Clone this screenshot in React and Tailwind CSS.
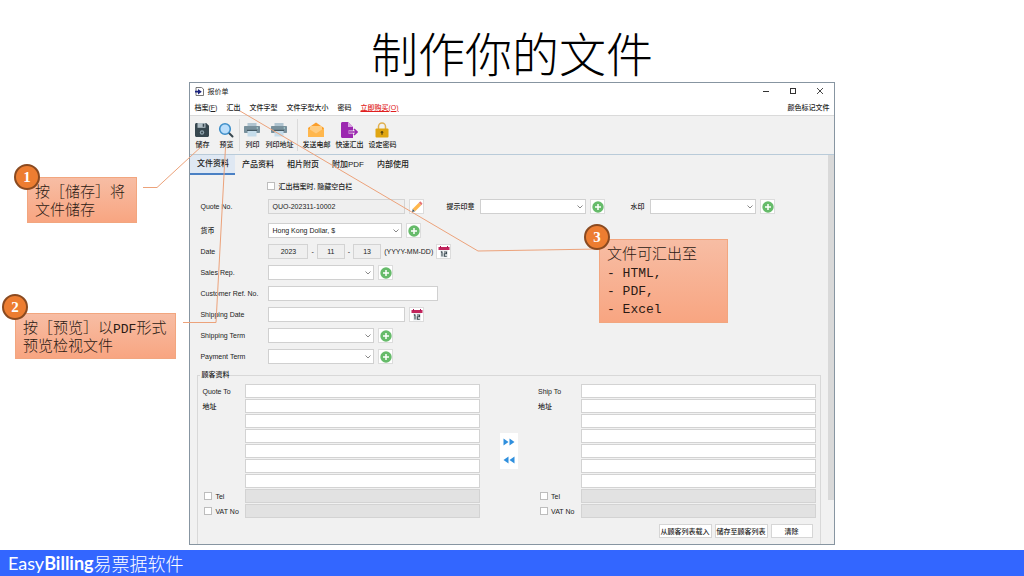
const DateIcon = () => (
  <svg viewBox="0 0 12 12" className="w-3 h-3">
    <rect x="0.5" y="1" width="11" height="3" fill="#c2255c" />
    <path d="M2.5 0v2M9.5 0v2" stroke="#ad1457" strokeWidth="1" />
    <rect x="2" y="4" width="8" height="7.5" fill="#eceff1" />
    <path d="M4 5.500v5M3 6.200l1-.7M6 6h2.500v1.800H6.300v2.400h2.500" stroke="#37474f" strokeWidth="1.100" fill="none" />
  </svg>
);

const PlusIcon = () => (
  <svg viewBox="0 0 12 12" className="w-3 h-3">
    <circle cx="6" cy="6" r="5.7" fill="#66bb6a" />
    <path d="M6 3v6M3 6h6" stroke="#fff" strokeWidth="1.500" />
  </svg>
);

const PencilIcon = () => (
  <svg viewBox="0 0 12 12" className="w-3 h-3">
    <path d="M1 11l.8-3.200 2.400 2.400z" fill="#455a64" />
    <path d="M1.800 7.800L7.800 1.800l2.400 2.400-6 6z" fill="#ffb74d" />
    <path d="M7.800 1.800l.9-.9c.4-.4.9-.4 1.300 0l1.100 1.100c.4.4.4.9 0 1.300l-.9.9z" fill="#e57373" />
  </svg>
);

const SaveIcon = () => (
  <svg viewBox="0 0 16 16" className="w-4 h-4">
    <path d="M1 2.500C1 1.700 1.700 1 2.500 1h9.700L15 3.800v9.700c0 .8-.7 1.500-1.500 1.500h-11C1.700 15 1 14.300 1 13.500z" fill="#37474f" />
    <rect x="3.500" y="1" width="8" height="4.800" fill="#b0bec5" />
    <rect x="8.700" y="1.800" width="1.600" height="3" fill="#37474f" />
    <circle cx="8" cy="10.500" r="2.200" fill="#90a4ae" />
    <circle cx="8" cy="10.500" r="1" fill="#37474f" />
  </svg>
);

const PreviewIcon = () => (
  <svg viewBox="0 0 16 16" className="w-4 h-4">
    <path d="M10.500 10.500l4 4" stroke="#37474f" strokeWidth="2" strokeLinecap="round" />
    <circle cx="7" cy="7" r="5.300" fill="#bbdefb" stroke="#3f8fc9" strokeWidth="1.600" />
  </svg>
);

const PrintIcon = () => (
  <svg viewBox="0 0 16 16" className="w-4 h-4">
    <rect x="3.500" y="1" width="9" height="4" fill="#b0c4d0" />
    <path d="M1 4h14c.6 0 1 .4 1 1v5c0 .6-.4 1-1 1H1c-.6 0-1-.4-1-1V5c0-.6.4-1 1-1z" fill="#78909c" />
    <rect x="3" y="7.800" width="10" height="1.200" fill="#455a64" />
    <rect x="3.500" y="9" width="9" height="5.500" fill="#c5dcea" />
    <circle cx="13.300" cy="6" r=".7" fill="#b2dfdb" />
  </svg>
);

const MailIcon = () => (
  <svg viewBox="0 0 16 16" className="w-4 h-4">
    <path d="M0 6l8-5.500L16 6v9H0z" fill="#fb9f2c" />
    <path d="M2 4h12v5l-6 3.500L2 9z" fill="#ffcc80" />
    <path d="M0 6.200l8 5.300 8-5.300V15H0z" fill="#ffb74d" />
  </svg>
);

const ExportIcon = () => (
  <svg viewBox="0 0 18 16" className="w-[18px] h-4">
    <path d="M1 1.500C1 .7 1.700 0 2.500 0H8l5 5v3.500H8.500v3H13V16H2.500C1.700 16 1 15.300 1 14.500z" fill="#9c27b0" />
    <path d="M8 0l5 5H8z" fill="#d9a3e3" />
    <path d="M8.500 10H17M14 7l3 3-3 3" stroke="#9c27b0" strokeWidth="1.600" fill="none" />
  </svg>
);

const LockIcon = () => (
  <svg viewBox="0 0 16 16" className="w-4 h-4">
    <path d="M4.500 8V4.500a3.500 3.500 0 017 0V8" stroke="#e0b050" strokeWidth="1.500" fill="none" />
    <rect x="1.500" y="6.500" width="13" height="9" rx="1" fill="#e0a612" />
    <circle cx="8" cy="10.300" r="1.300" fill="#5d4a10" />
    <path d="M8 10.500v2.500" stroke="#5d4a10" strokeWidth="1" />
  </svg>
);

const toolGroups = [
  [["储存", SaveIcon], ["预览", PreviewIcon]],
  [["列印", PrintIcon], ["列印地址", PrintIcon]],
  [["发送电邮", MailIcon], ["快速汇出", ExportIcon], ["设定密码", LockIcon]],
];

const tabs = ["文件资料", "产品资料", "相片附页", "附加PDF", "内部使用"];

const IconButton = ({ label, children }) => (
  <button aria-label={label} className="w-[15px] h-[15px] shrink-0 bg-white border border-[#dcdcdc] flex items-center justify-center">
    {children}
  </button>
);

const Select = ({ id, width, children }) => (
  <span className={`relative flex ${width}`}>
    <select id={id} className="appearance-none w-full h-[15px] bg-white border border-[#d0d0d0] pl-[3px] leading-[13px]">
      {children}
    </select>
    <svg viewBox="0 0 8 8" className="absolute right-0.5 top-1 w-2 h-2 pointer-events-none">
      <path d="M1.500 2.500L4 5l2.500-2.500" stroke="#888" fill="none" />
    </svg>
  </span>
);

const Row = ({ label, htmlFor, tall, children }) => (
  <div className={`flex items-center ${tall ? "h-[27px]" : "h-[21px]"}`}>
    <label htmlFor={htmlFor} className="w-[68px] shrink-0">{label}</label>
    <div className="flex items-center gap-1">{children}</div>
  </div>
);

const fieldClass = "h-[15px] border border-[#d0d0d0] bg-white px-[3px]";
const readOnlyClass = "h-[15px] border border-[#d3d3d3] bg-[#efefef]";
const partyClass = "flex-1 min-w-0 h-[14px] border border-[#d3d3d3]";

const Party = ({ id, title }) => (
  <div className="flex-1 min-w-0 flex flex-col gap-px">
    {[0, 1, 2, 3, 4, 5, 6].map((i) => (
      <div key={i} className="flex items-center">
        <label htmlFor={id + i} className="w-[43px]">{i === 0 ? title : i === 1 ? "地址" : ""}</label>
        <input id={id + i} type="text" className={`${partyClass} bg-white`} />
      </div>
    ))}
    {["Tel", "VAT No"].map((name) => (
      <div key={name} className="flex items-center">
        <label className="w-[43px] flex items-center gap-[3px] pl-0.5 whitespace-nowrap">
          <input type="checkbox" className="appearance-none w-2 h-2 bg-white border border-[#bdbdbd] shrink-0" />
          {name}
        </label>
        <input type="text" aria-label={name} disabled className={`${partyClass} bg-[#e2e2e2]`} />
      </div>
    ))}
  </div>
);

const BillingWindow = () => (
  <div className="w-[63%] mx-auto border border-[#8795a1] bg-[#f1f1f1] text-[7px] leading-none text-[#222] font-medium font-['Liberation_Sans','Noto_Sans_CJK_SC',sans-serif]">
    <div className="bg-white h-4 flex items-center justify-between pl-[5px] pr-[10px]">
      <div className="flex items-center gap-[3px] font-normal">
        <svg viewBox="0 0 9 9" className="w-[9px] h-[9px]">
          <path d="M1 .5h5.500L8.500 2v6.500H1z" fill="#fff" stroke="#555" strokeWidth=".8" />
          <path d="M0 3.800h3V2l3.800 2.700L3 7.400V5.600H0z" fill="#1a237e" />
        </svg>
        <span>报价单</span>
      </div>
      <div className="flex gap-[19px]">
        <button aria-label="Minimize">
          <svg viewBox="0 0 8 8" className="w-2 h-2"><path d="M1 4.500h6" stroke="#333" /></svg>
        </button>
        <button aria-label="Maximize">
          <svg viewBox="0 0 8 8" className="w-2 h-2"><rect x="1.500" y="1.500" width="5" height="5" fill="none" stroke="#333" /></svg>
        </button>
        <button aria-label="Close">
          <svg viewBox="0 0 8 8" className="w-2 h-2"><path d="M1 1l6 6M7 1L1 7" stroke="#333" strokeWidth=".9" /></svg>
        </button>
      </div>
    </div>

    <nav className="bg-white h-[17px] flex items-center gap-[9px] px-1 border-b border-[#dadada] whitespace-nowrap">
      <button>档案(<u>F</u>)</button>
      <button>汇出</button>
      <button>文件字型</button>
      <button>文件字型大小</button>
      <button>密码</button>
      <button className="text-[#e02020] underline">立即购买(O)</button>
      <button className="ml-auto">颜色标记文件</button>
    </nav>

    <div className="h-[39px] flex items-center pl-1 border-b border-[#b9cbd9]">
      {toolGroups.map((group, g) => (
        <div key={g} className={g === 0 ? "flex gap-2 pr-[5px]" : "h-8 flex items-center gap-[5px] px-1 border-l border-[#dadada]"}>
          {group.map(([label, Icon]) => (
            <button key={label} className="flex flex-col items-center gap-[3px] whitespace-nowrap">
              <Icon />
              {label}
            </button>
          ))}
        </div>
      ))}
    </div>

    <div className="flex">
      <div className="flex-1 min-w-0">
        <div className="flex text-[8px] h-5">
          {tabs.map((tab, i) => (
            <button key={tab} className={i === 0 ? "w-[45px] bg-[#dfe8f3] border-b-2 border-[#4a80c4]" : "w-[45px]"}>
              {tab}
            </button>
          ))}
        </div>

        <div className="pl-[10px] pt-1">
          <label className="h-[14px] flex items-center gap-[3px] pl-[67px]">
            <input type="checkbox" className="appearance-none w-2 h-2 bg-white border border-[#bdbdbd]" />
            汇出档案时, 隐藏空白栏
          </label>
          <Row label="Quote No." htmlFor="quote" tall>
            <input id="quote" type="text" readOnly value="QUO-202311-10002" className={`${readOnlyClass} w-[137px] px-[3px]`} />
            <IconButton label="Edit"><PencilIcon /></IconButton>
            <label htmlFor="stamp" className="ml-[18px] w-[30px] whitespace-nowrap">提示印章</label>
            <Select id="stamp" width="w-[106px]" />
            <IconButton label="Add stamp"><PlusIcon /></IconButton>
            <label htmlFor="watermark" className="ml-[21px] w-4">水印</label>
            <Select id="watermark" width="w-[106px]" />
            <IconButton label="Add watermark"><PlusIcon /></IconButton>
          </Row>
          <Row label="货币" htmlFor="currency">
            <Select id="currency" width="w-[134px]">
              <option>Hong Kong Dollar, $</option>
            </Select>
            <IconButton label="Add currency"><PlusIcon /></IconButton>
          </Row>
          <Row label="Date" htmlFor="year">
            <div className="flex items-center gap-[3px]">
              <input id="year" type="text" readOnly value="2023" className={`${readOnlyClass} w-10 text-center`} />
              <span>-</span>
              <input aria-label="Month" type="text" readOnly value="11" className={`${readOnlyClass} w-7 text-center`} />
              <span>-</span>
              <input aria-label="Day" type="text" readOnly value="13" className={`${readOnlyClass} w-7 text-center`} />
              <span>(YYYY-MM-DD)</span>
              <IconButton label="Pick date"><DateIcon /></IconButton>
            </div>
          </Row>
          <Row label="Sales Rep." htmlFor="sales">
            <Select id="sales" width="w-[106px]" />
            <IconButton label="Add sales rep"><PlusIcon /></IconButton>
          </Row>
          <Row label="Customer Ref. No." htmlFor="ref">
            <input id="ref" type="text" className={`${fieldClass} w-[170px]`} />
          </Row>
          <Row label="Shipping Date" htmlFor="shipdate">
            <input id="shipdate" type="text" className={`${fieldClass} w-[137px]`} />
            <IconButton label="Pick shipping date"><DateIcon /></IconButton>
          </Row>
          <Row label="Shipping Term" htmlFor="shipterm">
            <Select id="shipterm" width="w-[106px]" />
            <IconButton label="Add shipping term"><PlusIcon /></IconButton>
          </Row>
          <Row label="Payment Term" htmlFor="payterm">
            <Select id="payterm" width="w-[106px]" />
            <IconButton label="Add payment term"><PlusIcon /></IconButton>
          </Row>
        </div>

        <fieldset className="mx-[7px] mt-[3px] border border-b-0 border-[#d8d8d8] px-1 pt-1 pb-[6px]">
          <legend className="leading-[10px] -ml-0.5 px-px">顾客资料</legend>
          <div className="flex">
            <Party id="quote-to-" title="Quote To" />
            <div className="w-[58px] flex items-center justify-center">
              <div className="bg-white w-[18px] h-9 flex flex-col items-center justify-around">
                <button aria-label="Copy right">
                  <svg viewBox="0 0 12 8" className="w-3 h-2"><path d="M.5.500v7l5-3.500zM6.500.5v7l5-3.500z" fill="#2f8fdd" /></svg>
                </button>
                <button aria-label="Copy left">
                  <svg viewBox="0 0 12 8" className="w-3 h-2"><path d="M11.500.5v7l-5-3.500zM5.500.5v7l-5-3.500z" fill="#2f8fdd" /></svg>
                </button>
              </div>
            </div>
            <Party id="ship-to-" title="Ship To" />
          </div>
          <div className="flex justify-end gap-[3px] pt-[6px] pr-[3px] whitespace-nowrap">
            <button className="h-[14px] w-[53px] bg-white border border-[#d6d6d6]">从顾客列表载入</button>
            <button className="h-[14px] w-[53px] bg-white border border-[#d6d6d6]">储存至顾客列表</button>
            <button className="h-[14px] w-[42px] bg-white border border-[#d6d6d6]">清除</button>
          </div>
        </fieldset>
      </div>
      <div className="w-[6px] pb-11">
        <div className="h-full bg-[#d9d9d9]" />
      </div>
    </div>
  </div>
);

const Callout = ({ number, place, badge, children }) => (
  <div className={`absolute ${place} px-[7px] py-1 border border-[#f2a67f] bg-linear-to-b from-[#f7bda4] to-[#f8a581] text-[15px] leading-[18px] text-[#2b1a14] whitespace-nowrap`}>
    <span className={`absolute ${badge} w-[26px] h-[26px] rounded-full bg-[#ed7d31] border-2 border-[#8a4a20] text-white font-bold flex items-center justify-center font-['Liberation_Serif',serif]`}>
      {number}
    </span>
    {children}
  </div>
);

const Latin = ({ children }) => (
  <span className="text-[13px] leading-none font-['Liberation_Mono',monospace]">{children}</span>
);

export default function App() {
  return (
    <div className="relative min-h-screen flex flex-col bg-white font-['Noto_Sans_CJK_SC',sans-serif] font-light">
      <h1 className="pt-6 pb-0.5 text-center text-[47px] leading-[56px] text-black">制作你的文件</h1>
      <BillingWindow />

      <svg viewBox="0 0 1024 576" preserveAspectRatio="none" className="absolute inset-0 w-full h-full pointer-events-none">
        <g fill="none" stroke="#eca27a" strokeWidth="1">
          <path d="M143 187.500H157L203 145" />
          <path d="M183 322.500H216L225.500 147" />
          <path d="M240 111L478 251L600 249" />
        </g>
      </svg>

      <Callout number="1" place="left-[27px] top-[177px] w-[110px]" badge="-left-[14px] -top-[14px]">
        <p>按［储存］将</p>
        <p>文件储存</p>
      </Callout>
      <Callout number="2" place="left-[15px] top-[313px] w-[161px]" badge="-left-[14px] -top-5">
        <p>按［预览］以<Latin>PDF</Latin>形式</p>
        <p>预览检视文件</p>
      </Callout>
      <Callout number="3" place="left-[599px] top-[239px] w-[129px] h-[84px]" badge="-left-4 -top-4">
        <p>文件可汇出至</p>
        <ul>
          <li><Latin>- HTML,</Latin></li>
          <li><Latin>- PDF,</Latin></li>
          <li><Latin>- Excel</Latin></li>
        </ul>
      </Callout>

      <footer className="mt-auto h-[26px] flex items-center px-2 bg-[#3366ff] text-white text-[18px] leading-none">
        <span className="font-['Lato',sans-serif] font-normal">Easy<b>Billing</b></span>
        <span>易票据软件</span>
      </footer>
    </div>
  );
}
